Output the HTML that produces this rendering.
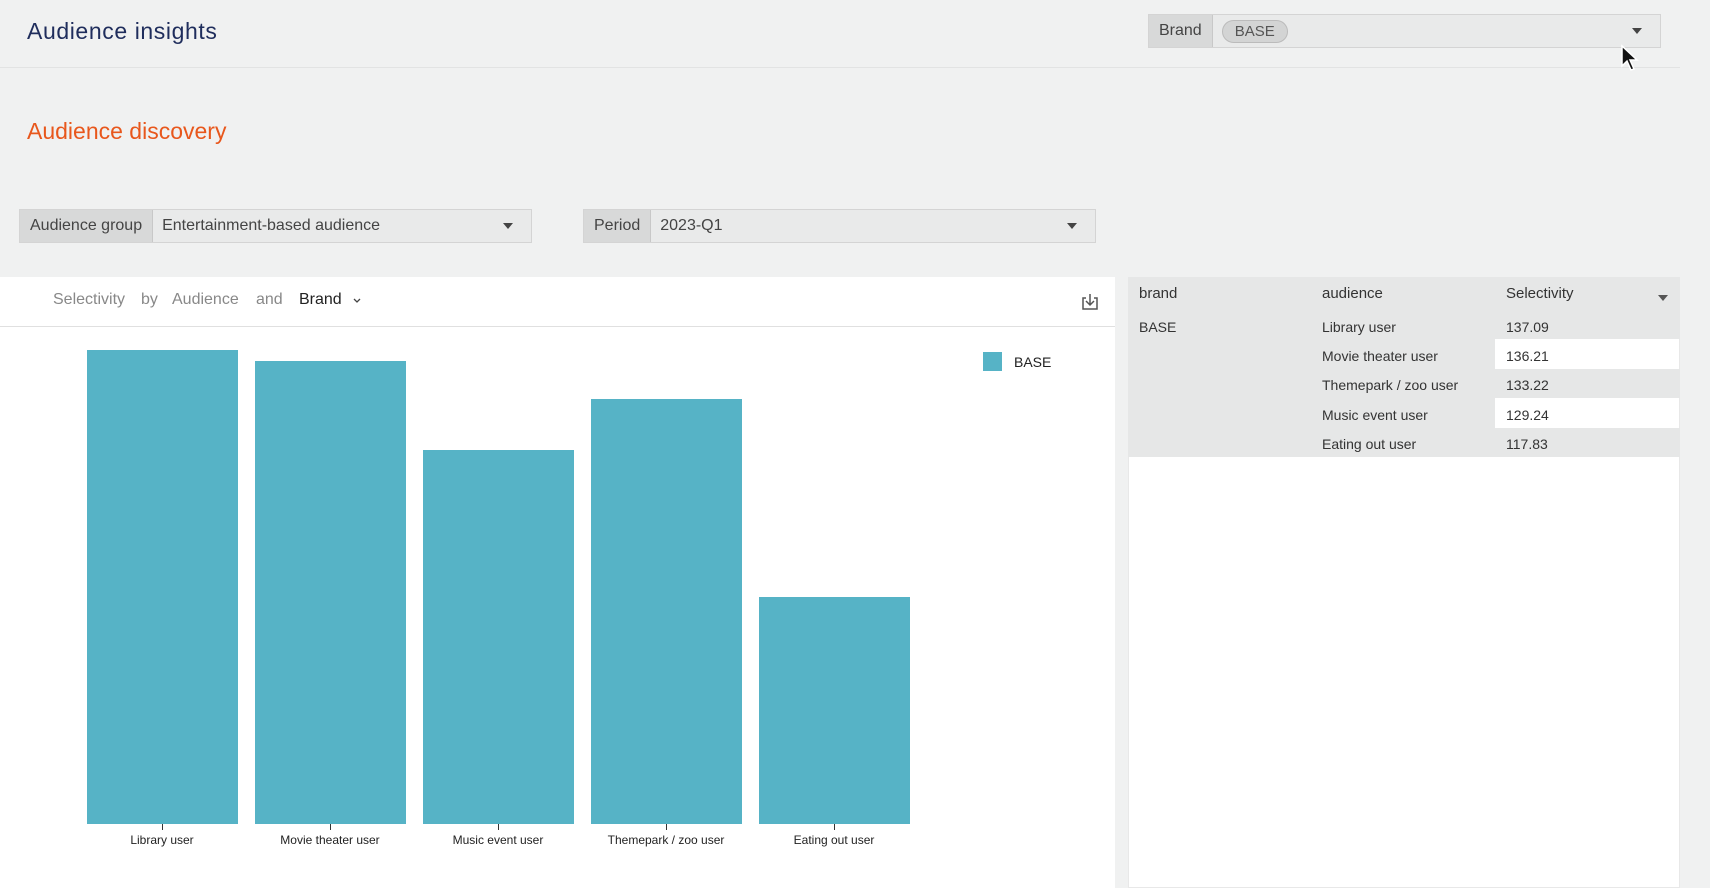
<!DOCTYPE html>
<html><head><meta charset="utf-8"><style>
*{box-sizing:border-box;margin:0;padding:0}
body{width:1710px;height:888px;background:#f0f1f1;font-family:"Liberation Sans",sans-serif;position:relative;overflow:hidden;color:#333}
.a{position:absolute}
.sel{position:absolute;height:34px;border:1px solid #d4d4d4;background:#e9eaea;display:flex;align-items:center;font-size:16px;color:#444}
.sel .lab{background:#d8d9d9;height:100%;display:flex;align-items:center;padding:0 10px;border-right:1px solid #c8c8c8}
.sel .val{padding-left:9px;flex:1}
.sel .ar{width:0;height:0;border-left:5px solid transparent;border-right:5px solid transparent;border-top:6px solid #444;margin-right:18px}
.bar{position:absolute;background:#56b3c6;width:151px;bottom:64px}
.xl{position:absolute;top:833px;font-size:12px;color:#222;width:200px;text-align:center}
.tk{position:absolute;top:824px;width:1px;height:6px;background:#333}
.row{position:absolute;left:1128px;width:552px;height:29px;font-size:14px;color:#333}
.row span{position:absolute;top:7px}
.t{position:absolute;top:291px;font-size:16px;color:#888}
</style></head><body>
<div class="a" style="left:27px;top:18px;font-size:23px;color:#1f2d5c;letter-spacing:0.6px;font-weight:500">Audience insights</div>
<div class="a" style="left:0;top:67px;width:1680px;height:1px;background:#e2e3e3"></div>
<div class="sel" style="left:1148px;top:14px;width:513px"><div class="lab">Brand</div><div class="val"><span style="display:inline-block;background:#d3d4d4;border:1px solid #bbb;border-radius:14px;padding:2px 12px;font-size:15px;color:#555">BASE</span></div><div class="ar"></div></div>
<svg class="a" style="left:1620px;top:44px" width="20" height="30" viewBox="0 0 20 30"><path d="M2 2 L2 22 L7 17 L11 26 L14 25 L10 16 L17 16 Z" fill="#111" stroke="#fff" stroke-width="1.5"/></svg>
<div class="a" style="left:27px;top:118px;font-size:23px;color:#e8571c">Audience discovery</div>
<div class="sel" style="left:19px;top:209px;width:513px"><div class="lab">Audience group</div><div class="val">Entertainment-based audience</div><div class="ar"></div></div>
<div class="sel" style="left:583px;top:209px;width:513px"><div class="lab">Period</div><div class="val">2023-Q1</div><div class="ar"></div></div>

<div class="a" style="left:0;top:277px;width:1115px;height:611px;background:#fff"></div>
<div class="a" style="left:0;top:326px;width:1115px;height:1px;background:#e0e0e0"></div>
<div class="t" style="left:53px">Selectivity</div>
<div class="t" style="left:141px">by</div>
<div class="t" style="left:172px">Audience</div>
<div class="t" style="left:256px">and</div>
<div class="t" style="left:299px;color:#222">Brand</div>
<svg class="a" style="left:352px;top:297px" width="10" height="8" viewBox="0 0 10 8" fill="none" stroke="#444" stroke-width="1.3"><path d="M2 2l3 3 3-3"/></svg>
<svg class="a" style="left:1080px;top:292px" width="20" height="20" viewBox="0 0 20 20" fill="none" stroke="#555" stroke-width="1.5"><path d="M6 6H3v11h14V6h-3M10 2v10M6 9l4 4 4-4"/></svg>
<div class="bar" style="left:87px;top:350px"></div>
<div class="bar" style="left:255px;top:361px"></div>
<div class="bar" style="left:423px;top:450px"></div>
<div class="bar" style="left:591px;top:399px"></div>
<div class="bar" style="left:759px;top:597px"></div>
<div class="tk" style="left:162px"></div><div class="tk" style="left:330px"></div><div class="tk" style="left:498px"></div><div class="tk" style="left:666px"></div><div class="tk" style="left:834px"></div>
<div class="xl" style="left:62px">Library user</div>
<div class="xl" style="left:230px">Movie theater user</div>
<div class="xl" style="left:398px">Music event user</div>
<div class="xl" style="left:566px">Themepark / zoo user</div>
<div class="xl" style="left:734px">Eating out user</div>
<div class="a" style="left:983px;top:352px;width:19px;height:19px;background:#56b3c6"></div>
<div class="a" style="left:1014px;top:354px;font-size:14px;color:#222">BASE</div>

<div class="a" style="left:1128px;top:277px;width:552px;height:611px;background:#fff;border:1px solid #e8e8e8"></div>
<div class="row" style="top:277px;height:33px;background:#e6e7e7;font-size:15px"><span style="left:11px;top:8px">brand</span><span style="left:194px;top:8px">audience</span><span style="left:378px;top:8px">Selectivity</span><span style="left:530px;top:18px;width:0;height:0;border-left:5px solid transparent;border-right:5px solid transparent;border-top:6px solid #555"></span></div>
<div class="a" style="left:1128px;top:310px;width:367px;height:147px;background:#e6e7e7"></div>
<div class="a" style="left:1495px;top:310px;width:185px;height:29px;background:#e6e7e7"></div>
<div class="a" style="left:1495px;top:369px;width:185px;height:29px;background:#e6e7e7"></div>
<div class="a" style="left:1495px;top:428px;width:185px;height:29px;background:#e6e7e7"></div>
<div class="row" style="top:312px"><span style="left:11px">BASE</span><span style="left:194px">Library user</span><span style="left:378px">137.09</span></div>
<div class="row" style="top:341px"><span style="left:194px">Movie theater user</span><span style="left:378px">136.21</span></div>
<div class="row" style="top:370px"><span style="left:194px">Themepark / zoo user</span><span style="left:378px">133.22</span></div>
<div class="row" style="top:400px"><span style="left:194px">Music event user</span><span style="left:378px">129.24</span></div>
<div class="row" style="top:429px"><span style="left:194px">Eating out user</span><span style="left:378px">117.83</span></div>
</body></html>
